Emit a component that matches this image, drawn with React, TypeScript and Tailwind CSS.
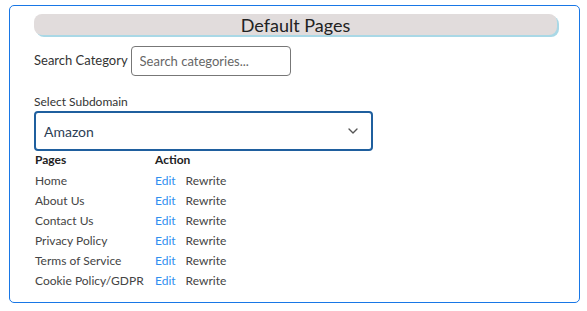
import React, { useState } from 'react';
import { ChevronDown } from 'lucide-react';

const PAGES = [
  'Home',
  'About Us',
  'Contact Us',
  'Privacy Policy',
  'Terms of Service',
  'Cookie Policy/GDPR',
];

const App: React.FC = () => {
  const [query, setQuery] = useState('');

  return (
    <div className="w-[587px] h-[311px] bg-white pt-[5px] pl-[9px] font-['Lato','Noto_Sans',sans-serif] text-[#333]">
      <div className="w-[571px] h-[298px] border border-[#1877e6] rounded-[5px] pt-[8px] pl-[24px] pr-[22px]">
        <div className="h-[21px] bg-[#e1dcdc] rounded-[8px] shadow-[2px_2px_0_#a9d8e6] flex items-center justify-center">
          <h2 className="text-[18px] leading-none text-[#222]">Default Pages</h2>
        </div>

        <div className="flex items-center gap-[3px] mt-[11px]">
          <label className="text-[13px] text-[#333]">Search Category</label>
          <input
            value={query}
            onChange={(e) => setQuery(e.target.value)}
            placeholder="Search categories..."
            className="w-[160px] h-[30px] border border-[#777] rounded-[4px] px-[8px] text-[13px] placeholder:text-[#666] outline-none"
          />
        </div>

        <div className="mt-[18px] text-[12px] leading-[16px] text-[#333]">Select Subdomain</div>
        <div className="mt-[1px] w-[339px] h-[40px] border-2 border-[#1f5f9e] rounded-[4px] flex items-center justify-between pl-[8px] pr-[10px]">
          <span className="text-[14px] text-[#2d3e55]">Amazon</span>
          <ChevronDown size={16} strokeWidth={2} className="text-[#555]" />
        </div>

        <table className="text-[12px] border-collapse">
          <thead>
            <tr className="h-[19px]">
              <th className="w-[120px] p-0 pb-[2px] pl-[1px] text-left font-bold text-[#222]">Pages</th>
              <th className="p-0 pb-[2px] pl-[1px] text-left font-bold text-[#222]" colSpan={2}>Action</th>
            </tr>
          </thead>
          <tbody>
            {PAGES.map((p) => (
              <tr key={p} className="h-[20px]">
                <td className="p-0 pl-[1px] text-[#444]">{p}</td>
                <td className="p-0 pl-[1px] pr-[10px] text-[#2f8ff0]">Edit</td>
                <td className="p-0 text-[#444]">Rewrite</td>
              </tr>
            ))}
          </tbody>
        </table>
      </div>
    </div>
  );
};

export default App;
